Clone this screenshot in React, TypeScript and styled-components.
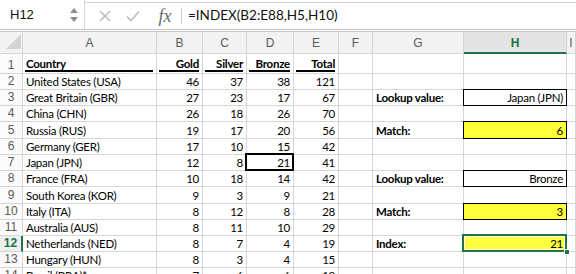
import React from "react";
import styled, { createGlobalStyle, css } from "styled-components";

const GlobalStyle = createGlobalStyle`
  html, body { margin: 0; padding: 0; background: #ffffff; }
  body { width: 576px; height: 274px; overflow: hidden; }
  * { box-sizing: border-box; }
`;

const GREEN = "#217346";
const GRID = "#d6d6d6";
const CELL_FONT = `"Lato", "Open Sans", sans-serif`;
const UI_FONT = `"Liberation Sans", Arial, sans-serif`;

const Window = styled.div`
  width: 576px;
  height: 274px;
  overflow: hidden;
  background: #ffffff;
`;

const FormulaBar = styled.div`
  display: flex;
  align-items: stretch;
  height: 32px;
  border-bottom: 3px double #c4c4c4;
`;

const NameBox = styled.div`
  width: 85px;
  display: flex;
  align-items: center;
  justify-content: space-between;
  padding: 0 4px 0 10px;
  border-right: 1px solid #d2d2d2;
  font-family: ${UI_FONT};
  font-size: 13px;
  color: #111;
`;

const Spinner = styled.svg`
  width: 10px;
  height: 18px;
  margin-right: 1px;
`;

const FormulaArea = styled.div`
  flex: 1;
  display: flex;
  align-items: center;
  border-top: 1px solid #d2d2d2;
  margin-top: 2px;
`;

const IconButton = styled.div<{ $first?: boolean }>`
  width: 28px;
  margin-left: ${(p) => (p.$first ? 6 : 0)}px;
  display: flex;
  align-items: center;
  justify-content: center;
`;

const Fx = styled.span`
  width: 32px;
  text-align: center;
  font-family: "Liberation Serif", "Times New Roman", serif;
  font-style: italic;
  font-size: 18px;
  color: #6a6a6a;
  padding-left: 4px;
`;

const FormulaDivider = styled.div`
  width: 1px;
  height: 16px;
  background: #c8c8c8;
  margin: 0 6px 0 2px;
`;

const FormulaText = styled.span`
  font-family: ${CELL_FONT};
  font-size: 13.5px;
  color: #111;
  padding-bottom: 2px;
`;

const COLS = "23px 134px 46px 44px 47px 45px 34px 91px 103px 1fr";

const SheetRow = styled.div<{ $h: number }>`
  display: grid;
  grid-template-columns: ${COLS};
  height: ${(p) => p.$h}px;
`;

const Corner = styled.div`
  position: relative;
  background: #f3f3f3;
  border-right: 1px solid ${GRID};
  border-bottom: 1px solid ${GRID};
`;

const CornerTriangle = styled.svg`
  position: absolute;
  right: 1px;
  bottom: 4px;
`;

const ColHeader = styled.div<{ $active?: boolean }>`
  display: flex;
  align-items: center;
  justify-content: center;
  font-family: ${UI_FONT};
  font-size: 12px;
  color: #5a5a5a;
  background: #f3f3f3;
  border-right: 1px solid ${GRID};
  border-bottom: 1px solid ${GRID};
  ${(p) =>
    p.$active &&
    css`
      background: #e4e4e4;
      color: ${GREEN};
      font-weight: bold;
      border-bottom: 2px solid ${GREEN};
      padding-top: 1px;
    `}
`;

const RowHeader = styled.div<{ $active?: boolean }>`
  display: flex;
  align-items: flex-end;
  justify-content: center;
  font-family: ${UI_FONT};
  font-size: 12px;
  line-height: 15px;
  color: #5a5a5a;
  background: #fbfbfb;
  border-right: 1px solid ${GRID};
  border-bottom: 1px solid ${GRID};
  ${(p) =>
    p.$active &&
    css`
      color: ${GREEN};
      font-weight: bold;
      background: #eeeeee;
      border-right: 2px solid ${GREEN};
    `}
`;

type Frame = "thin" | "thick" | "selected";

const Cell = styled.div<{
  $right?: boolean;
  $bold?: boolean;
  $under?: boolean;
  $fill?: string;
  $frame?: Frame;
}>`
  position: relative;
  display: flex;
  align-items: flex-end;
  justify-content: ${(p) => (p.$right ? "flex-end" : "flex-start")};
  padding: 0 3px 0 3px;
  font-family: ${CELL_FONT};
  font-size: 11.5px;
  letter-spacing: -0.25px;
  line-height: 15px;
  color: #000;
  font-weight: ${(p) => (p.$bold ? 700 : 400)};
  white-space: nowrap;
  background: ${(p) => p.$fill || "transparent"};
  border-right: 1px solid ${GRID};
  border-bottom: 1px solid ${GRID};
  ${(p) =>
    p.$under &&
    css`
      padding-bottom: 2px;
      &::before {
        content: "";
        position: absolute;
        left: 2px;
        right: 3px;
        bottom: 1px;
        height: 2px;
        background: #000;
      }
    `}
  ${(p) =>
    p.$frame === "thin" &&
    css`
      &::after {
        content: "";
        position: absolute;
        inset: -1px -1px -1px -1px;
        border: 1px solid #000;
        pointer-events: none;
      }
    `}
  ${(p) =>
    p.$frame === "thick" &&
    css`
      &::after {
        content: "";
        position: absolute;
        inset: -2px -1px -1px -2px;
        border: 2px solid #000;
        pointer-events: none;
      }
    `}
  ${(p) =>
    p.$frame === "selected" &&
    css`
      &::after {
        content: "";
        position: absolute;
        inset: -2px -1px -1px -2px;
        border: 2px solid ${GREEN};
        box-shadow: inset 0 0 0 1px #fff;
        pointer-events: none;
      }
    `}
`;

const FillHandle = styled.span`
  position: absolute;
  right: -4px;
  bottom: -4px;
  width: 6px;
  height: 6px;
  background: ${GREEN};
  border: 1px solid #fff;
  z-index: 2;
`;

type CellSpec = {
  v?: string | number;
  right?: boolean;
  bold?: boolean;
  under?: boolean;
  fill?: string;
  frame?: Frame;
  handle?: boolean;
};

const YELLOW = "#ffff3c";

const medals: [string, number, number, number, number][] = [
  ["United States (USA)", 46, 37, 38, 121],
  ["Great Britain (GBR)", 27, 23, 17, 67],
  ["China (CHN)", 26, 18, 26, 70],
  ["Russia (RUS)", 19, 17, 20, 56],
  ["Germany (GER)", 17, 10, 15, 42],
  ["Japan (JPN)", 12, 8, 21, 41],
  ["France (FRA)", 10, 18, 14, 42],
  ["South Korea (KOR)", 9, 3, 9, 21],
  ["Italy (ITA)", 8, 12, 8, 28],
  ["Australia (AUS)", 8, 11, 10, 29],
  ["Netherlands (NED)", 8, 7, 4, 19],
  ["Hungary (HUN)", 8, 3, 4, 15],
  ["Brazil (BRA)*", 7, 6, 6, 19],
];

const side: Record<number, [CellSpec, CellSpec]> = {
  3: [{ v: "Lookup value:", bold: true }, { v: "Japan (JPN)", right: true, frame: "thin" }],
  5: [{ v: "Match:", bold: true }, { v: 6, right: true, fill: YELLOW, frame: "thin" }],
  8: [{ v: "Lookup value:", bold: true }, { v: "Bronze", right: true, frame: "thin" }],
  10: [{ v: "Match:", bold: true }, { v: 3, right: true, fill: YELLOW, frame: "thin" }],
  12: [{ v: "Index:", bold: true }, { v: 21, right: true, fill: YELLOW, frame: "selected", handle: true }],
};

const rowHeights: Record<number, number> = { 1: 20, 5: 17, 9: 17 };

function buildRows(): CellSpec[][] {
  const rows: CellSpec[][] = [];
  rows.push([
    { v: "Country", bold: true, under: true },
    { v: "Gold", bold: true, under: true, right: true },
    { v: "Silver", bold: true, under: true, right: true },
    { v: "Bronze", bold: true, under: true, right: true },
    { v: "Total", bold: true, under: true, right: true },
    {},
    {},
    {},
    {},
  ]);
  medals.forEach((m, i) => {
    const r = i + 2;
    const s = side[r] || [{}, {}];
    rows.push([
      { v: m[0] },
      { v: m[1], right: true },
      { v: m[2], right: true },
      { v: m[3], right: true, frame: r === 7 ? "thick" : undefined },
      { v: m[4], right: true },
      {},
      s[0],
      s[1],
      {},
    ]);
  });
  return rows;
}

const colLetters = ["A", "B", "C", "D", "E", "F", "G", "H", "I"];

export default function App() {
  const rows = buildRows();
  return (
    <Window>
      <GlobalStyle />
      <FormulaBar>
        <NameBox>
          <span>H12</span>
          <Spinner viewBox="0 0 10 18">
            <path d="M1 7 L5 2 L9 7 Z" fill="#8e8e8e" />
            <path d="M1 11 L5 16 L9 11 Z" fill="#8e8e8e" />
          </Spinner>
        </NameBox>
        <FormulaArea>
          <IconButton $first>
            <svg width="14" height="14" viewBox="0 0 14 14">
              <path d="M2 2 L12 12 M12 2 L2 12" stroke="#bdbdbd" strokeWidth="1.6" />
            </svg>
          </IconButton>
          <IconButton>
            <svg width="16" height="14" viewBox="0 0 16 14">
              <path d="M2 7.5 L6 11.5 L14 2.5" stroke="#bdbdbd" strokeWidth="1.6" fill="none" />
            </svg>
          </IconButton>
          <Fx>fx</Fx>
          <FormulaDivider />
          <FormulaText>=INDEX(B2:E88,H5,H10)</FormulaText>
        </FormulaArea>
      </FormulaBar>

      <SheetRow $h={22}>
        <Corner>
          <CornerTriangle width="15" height="15" viewBox="0 0 15 15">
            <path d="M15 0 L15 15 L0 15 Z" fill="#d3d3d3" />
          </CornerTriangle>
        </Corner>
        {colLetters.map((c) => (
          <ColHeader key={c} $active={c === "H"}>
            {c}
          </ColHeader>
        ))}
      </SheetRow>

      {rows.map((cells, i) => {
        const r = i + 1;
        return (
          <SheetRow key={r} $h={rowHeights[r] || 16}>
            <RowHeader $active={r === 12}>{r}</RowHeader>
            {cells.map((c, j) => (
              <Cell
                key={j}
                $right={c.right}
                $bold={c.bold}
                $under={c.under}
                $fill={c.fill}
                $frame={c.frame}
              >
                {c.v}
                {c.handle && <FillHandle />}
              </Cell>
            ))}
          </SheetRow>
        );
      })}
    </Window>
  );
}
